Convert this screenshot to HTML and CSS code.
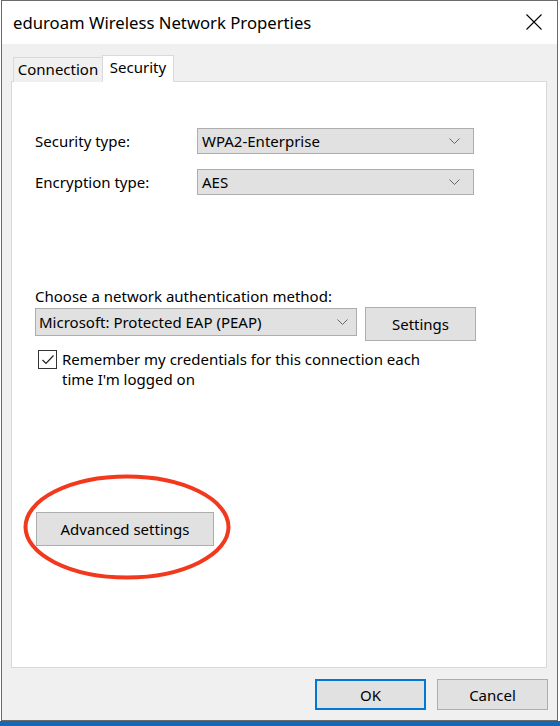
FILE: index.html
```html
<!DOCTYPE html>
<html>
<head>
<meta charset="utf-8">
<link rel="stylesheet" href="styles.css">
</head>
<body>
<div class="window">
  <div class="titlebar">
    <span class="title">eduroam Wireless Network Properties</span>
    <svg class="close" width="16" height="16" viewBox="0 0 16 16"><path d="M0.5 0.5 L15.5 15.5 M15.5 0.5 L0.5 15.5" stroke="#000" stroke-width="1.1" fill="none"/></svg>
  </div>
  <div class="body">
    <div class="tabs">
      <div class="tab">Connection</div>
      <div class="tab active">Security</div>
    </div>
    <div class="panel">
      <div class="typegrid">
        <span class="label">Security type:</span>
        <div class="select wide"><span>WPA2-Enterprise</span><svg class="chev" width="11" height="6" viewBox="0 0 11 6"><polyline points="0.5,0.5 5.5,5.5 10.5,0.5" stroke="#666" fill="none"/></svg></div>
        <span class="label">Encryption type:</span>
        <div class="select wide"><span>AES</span><svg class="chev" width="11" height="6" viewBox="0 0 11 6"><polyline points="0.5,0.5 5.5,5.5 10.5,0.5" stroke="#666" fill="none"/></svg></div>
      </div>
      <div class="authlabel">Choose a network authentication method:</div>
      <div class="authrow">
        <div class="select method"><span>Microsoft: Protected EAP (PEAP)</span><svg class="chev" width="11" height="6" viewBox="0 0 11 6"><polyline points="0.5,0.5 5.5,5.5 10.5,0.5" stroke="#666" fill="none"/></svg></div>
        <button class="btn settings">Settings</button>
      </div>
      <div class="checkrow">
        <span class="checkbox"><svg width="16" height="16" viewBox="0 0 16 16"><polyline points="2.5,8 6,11.5 13.5,3.5" stroke="#222" stroke-width="1.2" fill="none"/></svg></span>
        <span class="checktext">Remember my credentials for this connection each<br>time I'm logged on</span>
      </div>
      <button class="btn advanced">Advanced settings</button>
    </div>
    <div class="footer">
      <button class="btn ok">OK</button>
      <button class="btn">Cancel</button>
    </div>
    <svg class="highlight" width="210" height="108" viewBox="0 0 210 108"><ellipse cx="105" cy="54" rx="101.5" ry="50.5" stroke="#f2391d" stroke-width="4" fill="none"/></svg>
  </div>
</div>
</body>
</html>
```
FILE: styles.css
```css
html, body {
  margin: 0;
  padding: 0;
}
body {
  width: 560px;
  height: 726px;
  overflow: hidden;
  background: linear-gradient(to bottom, #ffffff 721px, #1169b8 721px);
  font-family: "Noto Sans", "Open Sans", sans-serif;
  font-size: 15px;
  color: #000;
}
.window {
  position: relative;
  box-sizing: border-box;
  margin-left: 1px;
  width: 557px;
  height: 721px;
  border: 1px solid #6a6a6a;
  background: #f0f0f0;
  display: flex;
  flex-direction: column;
}
.titlebar {
  height: 43px;
  background: #fff;
  display: flex;
  align-items: center;
  justify-content: space-between;
  padding: 0 15px 0 11px;
  flex-shrink: 0;
}
.title {
  font-size: 16.7px;
  margin-top: 0;
}
.close {
  margin-top: -1px;
}
.body {
  position: relative;
  flex: 1;
  padding: 11px 8px 0 9px;
  display: flex;
  flex-direction: column;
}
.tabs {
  display: flex;
  align-items: flex-end;
  margin-left: 2px;
  margin-bottom: -1px;
  position: relative;
  z-index: 1;
}
.tab {
  box-sizing: border-box;
  height: 25px;
  border: 1px solid #d9d9d9;
  border-bottom: none;
  background: #f0f0f0;
  line-height: 23px;
  width: 90px;
  text-align: center;
}
.tab.active {
  height: 27px;
  width: 72px;
  background: #fff;
  line-height: 22px;
  margin-left: -1px;
  border-bottom: 1px solid #fff;
}
.panel {
  box-sizing: border-box;
  width: 536px;
  height: 587px;
  background: #fff;
  border: 1px solid #d9d9d9;
  padding: 46px 0 0 23px;
}
.typegrid {
  display: grid;
  grid-template-columns: 162px 277px;
  row-gap: 15px;
  align-items: center;
}
.label {
  line-height: 20px;
}
.select {
  box-sizing: border-box;
  height: 26px;
  background: #e1e1e1;
  border: 1px solid #adadad;
  display: flex;
  align-items: center;
  justify-content: space-between;
  padding: 0 13px 0 4px;
  line-height: 20px;
}
.authlabel {
  margin-top: 91px;
  line-height: 20px;
}
.authrow {
  display: flex;
  align-items: flex-start;
  gap: 8px;
  margin-top: 1px;
}
.select.method {
  width: 322px;
  height: 28px;
  margin-top: 1px;
  padding: 0 8px 0 3px;
}
.btn {
  box-sizing: border-box;
  font-family: inherit;
  font-size: 15px;
  color: #000;
  background: #e1e1e1;
  border: 1px solid #adadad;
  border-radius: 0;
  padding: 0;
  margin: 0;
  line-height: 20px;
}
.settings {
  width: 111px;
  height: 34px;
}
.checkrow {
  display: flex;
  align-items: flex-start;
  margin-top: 8px;
  margin-left: 3px;
}
.checkbox {
  box-sizing: border-box;
  width: 19px;
  height: 19px;
  border: 1px solid #333;
  margin-top: 1px;
  display: flex;
  align-items: center;
  justify-content: center;
  flex-shrink: 0;
}
.checktext {
  margin-left: 5px;
  line-height: 20px;
}
.advanced {
  display: block;
  width: 178px;
  height: 34px;
  margin-top: 123px;
  margin-left: 1px;
}
.footer {
  display: flex;
  justify-content: flex-end;
  gap: 11px;
  margin-top: 11px;
  margin-right: 1px;
}
.footer .btn {
  width: 111px;
  height: 31px;
}
.footer .ok {
  border: 2px solid #0078d7;
}
.highlight {
  position: absolute;
  left: 20px;
  top: 429px;
}
```
